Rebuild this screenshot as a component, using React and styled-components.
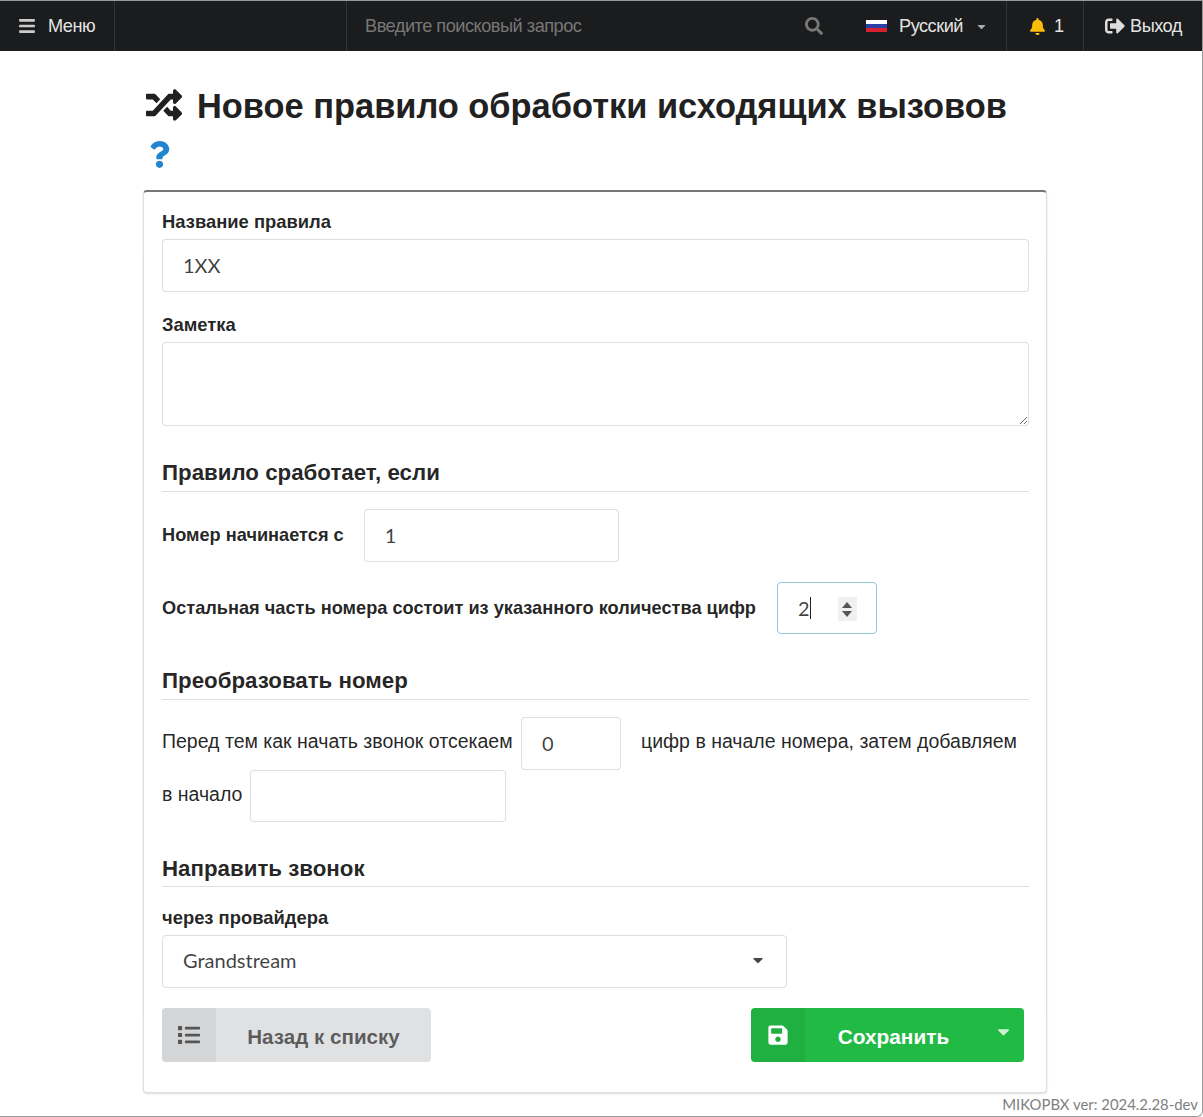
import styled, { createGlobalStyle } from "styled-components";
import { FaRandom, FaBars, FaSearch, FaBell, FaSignOutAlt, FaQuestion, FaList, FaSave, FaCaretDown } from "react-icons/fa";

const GlobalStyle = createGlobalStyle`
  html, body {
    margin: 0;
    padding: 0;
    background: #fff;
  }
  body {
    font-family: "Liberation Sans", Arial, sans-serif;
    color: rgba(0, 0, 0, 0.87);
  }
  * {
    box-sizing: border-box;
  }
`;

const Frame = styled.div`
  height: 1117px;
  border-top: 1px solid #999;
  border-right: 1px solid #999;
  border-bottom: 1px solid #999;
  border-bottom-right-radius: 6px;
  overflow: hidden;
`;

const Nav = styled.div`
  height: 50px;
  display: flex;
  align-items: stretch;
  background: #1b1c1d;
  color: rgba(255, 255, 255, 0.9);
  font-size: 18.2px;
  letter-spacing: -0.5px;
`;

const NavItem = styled.div`
  display: flex;
  align-items: center;
  gap: ${(p) => p.$gap || 8}px;
  width: ${(p) => p.$width}px;
  padding-left: ${(p) => p.$pad || 0}px;
  border-right: ${(p) => (p.$divider ? "1px solid #333435" : "none")};
`;

const NavSearch = styled.div`
  flex: 1;
  display: flex;
  align-items: center;
  padding: 0 2px 0 18px;
  border-left: 1px solid #333435;
  color: #777;
`;

const SearchText = styled.span`
  flex: 1;
`;

const NavSpacer = styled.div`
  width: 231px;
`;

const Flag = styled.span`
  width: 21px;
  height: 12px;
  background: linear-gradient(#fff 0 33%, #2a3fa8 33% 66%, #d8212f 66% 100%);
`;

const Page = styled.div`
  width: 904px;
  margin-left: 143px;
`;

const Title = styled.h1`
  margin: 31px 0 10px;
  padding-left: 3px;
  font-size: 34.4px;
  line-height: 49px;
  font-weight: 700;
  color: #212121;
`;

const TitleIcon = styled.span`
  display: inline-block;
  width: 51px;
  vertical-align: -5px;
  font-size: 36px;
  line-height: 1;
`;

const HelpIcon = styled.span`
  display: block;
  height: 49px;
  padding-top: 10px;
  color: #2185d0;
  font-size: 27px;
  line-height: 1;
`;

const Segment = styled.div`
  height: 903px;
  padding: 19px 17px 0 18px;
  border: 1px solid rgba(34, 36, 38, 0.15);
  border-top: 2px solid #767676;
  border-radius: 4px;
  box-shadow: 0 1px 2px rgba(34, 36, 38, 0.15);
`;

const Label = styled.label`
  display: block;
  margin-bottom: 7px;
  padding-top: 1px;
  font-size: 18.4px;
  line-height: 20px;
  font-weight: 700;
`;

const Input = styled.input`
  display: ${(p) => (p.$inline ? "inline-block" : "block")};
  width: ${(p) => p.$width || "100%"};
  height: ${(p) => p.$height || 53}px;
  padding: 0 20px 2px;
  border: 1px solid rgba(34, 36, 38, 0.15);
  border-radius: 4px;
  outline: none;
  font-family: "Lato", sans-serif;
  font-size: 20px;
  color: rgba(0, 0, 0, 0.75);
  vertical-align: top;
`;

const TextArea = styled.textarea`
  display: block;
  width: 100%;
  height: 84px;
  border: 1px solid rgba(34, 36, 38, 0.15);
  border-radius: 4px;
  outline: none;
`;

const Field = styled.div`
  margin-bottom: 22px;
`;

const Section = styled.h4`
  margin: ${(p) => p.$top}px 0 ${(p) => p.$bottom || 17}px;
  padding-bottom: ${(p) => p.$under || 8}px;
  border-bottom: 1px solid rgba(34, 36, 38, 0.15);
  font-size: 22.3px;
  line-height: 20px;
  font-weight: 700;
`;

const InlineRow = styled.div`
  display: flex;
  align-items: center;
  gap: ${(p) => p.$gap}px;
  margin-bottom: 20px;
  font-size: 18.2px;
  font-weight: 700;
`;

const NumberBox = styled.div`
  position: relative;
  display: flex;
  align-items: center;
  width: 100px;
  height: 52px;
  padding-left: 20px;
  border: 1px solid #96c8da;
  border-radius: 4px;
  font-family: "Lato", sans-serif;
  font-size: 20px;
  font-weight: 400;
  color: rgba(0, 0, 0, 0.75);
`;

const Caret = styled.span`
  width: 1px;
  height: 22px;
  background: #222;
`;

const Spinner = styled.span`
  position: absolute;
  right: 19px;
  top: 14px;
  display: flex;
  flex-direction: column;
  align-items: center;
  justify-content: center;
  gap: 3px;
  width: 19px;
  height: 24px;
  background: #f0f0f0;
`;

const SpinArrow = styled.span`
  width: 0;
  height: 0;
  border-left: 5px solid transparent;
  border-right: 5px solid transparent;
  border-bottom: ${(p) => (p.$down ? "none" : "6px solid #555")};
  border-top: ${(p) => (p.$down ? "6px solid #555" : "none")};
`;

const Sentence = styled.div`
  font-size: 19.5px;
  line-height: 49px;
`;

const Gap = styled.span`
  display: inline-block;
  width: ${(p) => p.$width}px;
`;

const SelectBox = styled.div`
  display: flex;
  align-items: center;
  justify-content: space-between;
  width: 625px;
  height: 53px;
  padding: 0 20px 3px;
  border: 1px solid rgba(34, 36, 38, 0.15);
  border-radius: 4px;
  font-family: "Lato", sans-serif;
  font-size: 20px;
  color: rgba(0, 0, 0, 0.75);
`;

const Buttons = styled.div`
  display: flex;
  justify-content: space-between;
  margin-top: 20px;
  padding-right: 5px;
`;

const Button = styled.div`
  display: flex;
  align-items: center;
  width: ${(p) => p.$width}px;
  height: 54px;
  border-radius: 4px;
  overflow: hidden;
  background: ${(p) => (p.$green ? "#21ba45" : "#e0e1e2")};
  color: ${(p) => (p.$green ? "#fff" : "rgba(0, 0, 0, 0.6)")};
  font-size: ${(p) => (p.$green ? 20.8 : 20.6)}px;
  font-weight: 700;
`;

const ButtonIcon = styled.span`
  display: flex;
  align-items: center;
  justify-content: center;
  width: 54px;
  height: 100%;
  background: rgba(0, 0, 0, 0.05);
  font-size: 22px;
`;

const ButtonLabel = styled.span`
  flex: 1;
  padding-top: 3px;
  text-align: center;
`;

const ButtonCaret = styled.span`
  display: flex;
  width: 42px;
  justify-content: center;
  font-size: 19px;
  opacity: 0.8;
  margin-top: -8px;
`;

const Version = styled.div`
  margin-top: 2px;
  padding-right: 4px;
  text-align: right;
  font-family: "Lato", sans-serif;
  font-size: 14.9px;
  line-height: 18px;
  color: #808080;
`;

export default function App() {
  return (
    <>
      <GlobalStyle />
      <Frame>
        <Nav>
          <NavItem $width={115} $pad={18} $gap={12} $divider>
            <FaBars size={18} color="#ccc" />
            <span>Меню</span>
          </NavItem>
          <NavSpacer />
          <NavSearch>
            <SearchText>Введите поисковый запрос</SearchText>
            <FaSearch size={18} />
          </NavSearch>
          <NavItem $width={182} $pad={41} $gap={12} $divider>
            <Flag />
            <span>Русский</span>
            <FaCaretDown size={13} color="#aaa" />
          </NavItem>
          <NavItem $width={77} $pad={22} $gap={8} $divider>
            <FaBell size={17} color="#fbbd08" />
            <span>1</span>
          </NavItem>
          <NavItem $width={118} $pad={21} $gap={5}>
            <FaSignOutAlt size={20} color="#ddd" />
            <span>Выход</span>
          </NavItem>
        </Nav>
        <Page>
          <Title>
            <TitleIcon>
              <FaRandom />
            </TitleIcon>
            Новое правило обработки исходящих вызовов
            <HelpIcon>
              <FaQuestion />
            </HelpIcon>
          </Title>
          <Segment>
            <Field>
              <Label>Название правила</Label>
              <Input readOnly value="1XX" />
            </Field>
            <Field>
              <Label>Заметка</Label>
              <TextArea readOnly />
            </Field>
            <Section $top={37}>Правило сработает, если</Section>
            <InlineRow $gap={20}>
              <span>Номер начинается с</span>
              <Input readOnly value="1" $inline $width="255px" />
            </InlineRow>
            <InlineRow $gap={21}>
              <span>Остальная часть номера состоит из указанного количества цифр</span>
              <NumberBox>
                2<Caret />
                <Spinner>
                  <SpinArrow />
                  <SpinArrow $down />
                </Spinner>
              </NumberBox>
            </InlineRow>
            <Section $top={37}>Преобразовать номер</Section>
            <Sentence>
              <span>Перед тем как начать звонок отсекаем</span> <Gap $width={3} />
              <Input readOnly value="0" $inline $width="100px" />
              <Gap $width={20} />
              <span>цифр в начале номера, затем добавляем</span> <span>в начало</span> <Gap $width={2} />
              <Input readOnly $inline $width="256px" $height={52} />
            </Sentence>
            <Section $top={37} $bottom={20} $under={7}>
              Направить звонок
            </Section>
            <Label>через провайдера</Label>
            <SelectBox>
              Grandstream
              <FaCaretDown size={16} color="#444" />
            </SelectBox>
            <Buttons>
              <Button $width={269}>
                <ButtonIcon>
                  <FaList />
                </ButtonIcon>
                <ButtonLabel>Назад к списку</ButtonLabel>
              </Button>
              <Button $width={273} $green>
                <ButtonIcon>
                  <FaSave />
                </ButtonIcon>
                <ButtonLabel>Сохранить</ButtonLabel>
                <ButtonCaret>
                  <FaCaretDown />
                </ButtonCaret>
              </Button>
            </Buttons>
          </Segment>
        </Page>
        <Version>MIKOPBX ver: 2024.2.28-dev</Version>
      </Frame>
    </>
  );
}
